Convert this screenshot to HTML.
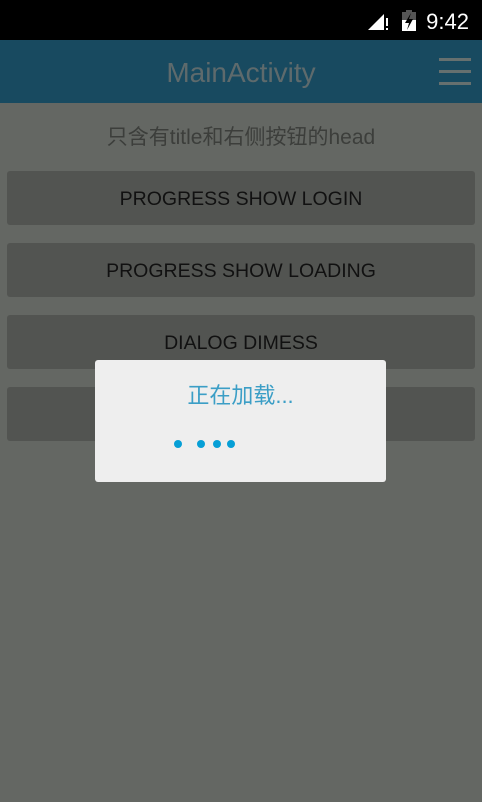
<!DOCTYPE html>
<html><head><meta charset="utf-8"><style>
*{margin:0;padding:0;box-sizing:border-box}
body{width:482px;height:802px;overflow:hidden;background:#646763;font-family:"Liberation Sans","Noto Sans CJK SC",sans-serif;position:relative}
.status{position:absolute;left:0;top:0;width:482px;height:40px;background:#000}
.time{position:absolute;right:13px;top:9px;color:#fff;font-size:22px}
.bar{position:absolute;left:0;top:40px;width:482px;height:63px;background:#184a60}
.title{position:absolute;left:0;right:0;top:57px;text-align:center;color:#5e6a6c;font-size:28px}
.menu span{position:absolute;left:439px;width:32px;height:3px;background:#66706f}
.sub{position:absolute;left:0;right:0;top:121px;text-align:center;color:#3c3e3b;font-size:21px}
.btn{position:absolute;left:7px;width:468px;height:54px;background:#525451;border-radius:3px;color:#111;font-size:19.5px;text-align:center;line-height:57px}
.dlg{position:absolute;left:95px;top:360px;width:291px;height:122px;background:#eeeeee;border-radius:3px}
.dlg .t{position:absolute;left:0;right:0;top:18px;text-align:center;color:#3b9ec6;font-size:22px}
.dot{position:absolute;width:8px;height:8px;border-radius:50%;background:#069fd6;top:80px}
</style></head><body>
<div class="status">
<svg style="position:absolute;left:368px;top:11px" width="24" height="20"><polygon points="0,19 16,19 16,3" fill="#fff"/><rect x="18" y="7" width="2" height="8" fill="#fff"/><rect x="18" y="17" width="2" height="2" fill="#fff"/></svg>
<svg style="position:absolute;left:402px;top:10px" width="14" height="22"><rect x="4" y="0" width="6" height="3" fill="#555"/><rect x="0" y="2" width="14" height="8" fill="#555"/><rect x="0" y="10" width="14" height="11" fill="#fff"/><polygon points="9,3 3,13 7,13 5,20 11,9 7,9" fill="#000"/></svg>
<div class="time">9:42</div>
</div>
<div class="bar"></div>
<div class="title">MainActivity</div>
<div class="menu"><span style="top:58px"></span><span style="top:70px"></span><span style="top:82px"></span></div>
<div class="sub">只含有title和右侧按钮的head</div>
<div class="btn" style="top:171px">PROGRESS SHOW LOGIN</div>
<div class="btn" style="top:243px">PROGRESS SHOW LOADING</div>
<div class="btn" style="top:315px">DIALOG DIMESS</div>
<div class="btn" style="top:387px"></div>
<div class="dlg">
<div class="t">正在加载...</div>
<div class="dot" style="left:79px"></div>
<div class="dot" style="left:102px"></div>
<div class="dot" style="left:118px"></div>
<div class="dot" style="left:132px"></div>
</div>
</body></html>
